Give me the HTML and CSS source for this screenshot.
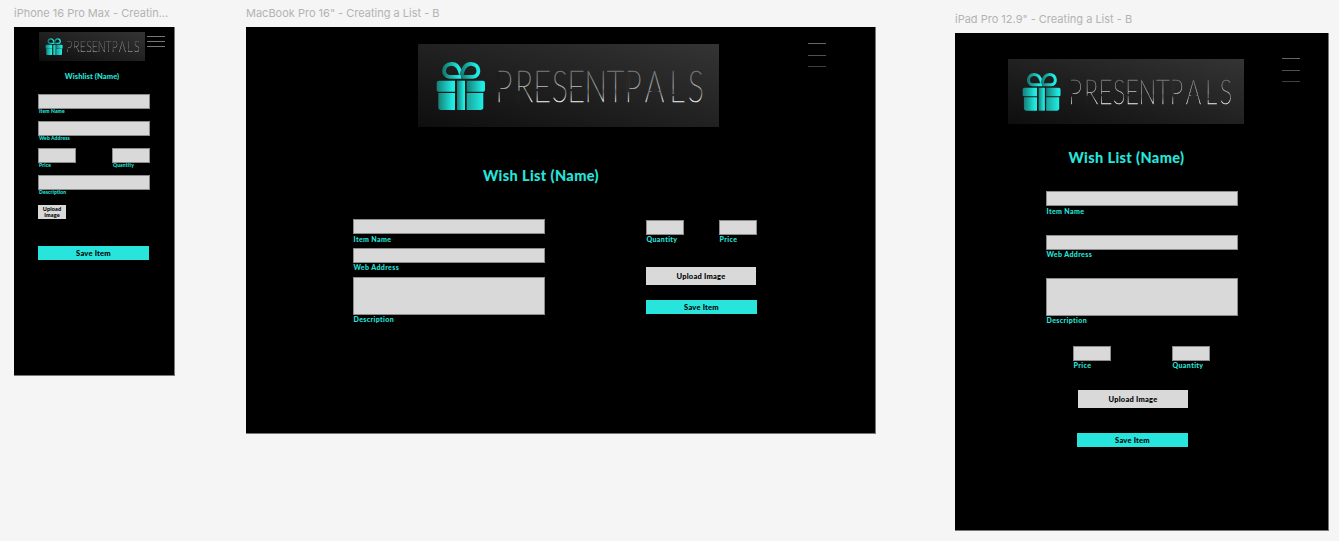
FILE: index.html
```html
<!DOCTYPE html>
<html lang="en">
<head>
<meta charset="utf-8">
<title>Creating a List - B</title>
<link rel="stylesheet" href="styles.css">
</head>
<body>
<svg class="defs" width="0" height="0" aria-hidden="true">
  <defs>
    <linearGradient id="teal"><stop offset="0" stop-color="#168078"/><stop offset=".85" stop-color="#20eee5"/></linearGradient>
    <linearGradient id="teal-soft"><stop offset="0" stop-color="#1ba69d"/><stop offset="1" stop-color="#20f2e8"/></linearGradient>
    <linearGradient id="panel" x1="0" y1="1" x2="1" y2="0"><stop offset="0" stop-color="#0f0f0f"/><stop offset="1" stop-color="#353535"/></linearGradient>
    <linearGradient id="silver" x1="0" y1="0" x2="0" y2="1"><stop offset=".2" stop-color="#6c6c6c"/><stop offset=".55" stop-color="#a8a8a8"/><stop offset=".62" stop-color="#777"/><stop offset=".8" stop-color="#e2e2e2"/></linearGradient>
    <symbol id="gift" viewBox="0 0 301 83">
      <rect width="301" height="83" fill="url(#panel)"/>
      <path d="M43.3 32.8H31.5C23.8 32.5 24.2 20.2 33.5 19.8C39.5 19.6 42 25.5 43.3 31.5" fill="none" stroke="url(#teal)" stroke-width="3.8"/>
      <path d="M43.3 32.8H55C62.7 32.5 62.3 20.2 53 19.8C47 19.6 44.6 25.5 43.3 31.5" fill="none" stroke="url(#teal)" stroke-width="3.8"/>
      <path d="M37 36.7H21Q18.7 36.7 18.7 39V46Q18.7 47.7 20.4 47.7H37Z" fill="url(#teal)"/>
      <path d="M48.7 36.7H64.7Q67 36.7 67 39V46Q67 47.7 65.3 47.7H48.7Z" fill="url(#teal)"/>
      <path d="M20.3 49H37V66H23Q20.3 66 20.3 63.3Z" fill="url(#teal)"/>
      <path d="M48.7 49H65.3V63.3Q65.3 66 62.6 66H48.7Z" fill="url(#teal-soft)"/>
      <rect x="39" y="36.7" width="8" height="29.3" fill="url(#teal)"/>
    </symbol>
    <!-- stencil gaps in the wordmark -->
    <symbol id="gaps" viewBox="0 0 301 83">
      <rect x="78.500" y="28" width="4" height="20" fill="#1e1e1e"/>
      <rect x="98.500" y="47" width="4" height="12" fill="#1e1e1e"/>
      <rect x="116.500" y="45" width="4" height="2" fill="#212121"/>
      <rect x="150.500" y="45" width="4" height="2" fill="#232323"/>
      <rect x="207.500" y="28" width="4" height="20" fill="#292929"/>
      <rect x="233.500" y="44.500" width="7" height="4" fill="#292929"/>
      <rect x="252.500" y="50" width="4" height="2" fill="#2a2a2a"/>
    </symbol>
  </defs>
</svg>
<main class="canvas">
  <section class="artboard phone">
    <h2 class="artboard-name">iPhone 16 Pro Max - Creatin...</h2>
    <div class="screen">
      <header class="top">
        <svg class="logo" viewBox="0 0 301 83" preserveAspectRatio="none"><use href="#gift" width="301" height="83"/><text class="wordmark" transform="translate(0 58) scale(.68 1)" x="114 143 170 197 220 245 278 304 334 370 397">PRESENTPALS</text><use href="#gaps" width="301" height="83"/></svg>
        <div class="menu"><i></i><i></i><i></i></div>
      </header>
      <h1 class="title">Wishlist (Name)</h1>
      <form class="form">
        <label class="field"><span class="box"></span><span class="caption">Item Name</span></label>
        <label class="field"><span class="box"></span><span class="caption">Web Address</span></label>
        <div class="pair">
          <label class="field"><span class="box"></span><span class="caption">Price</span></label>
          <label class="field"><span class="box"></span><span class="caption">Quantity</span></label>
        </div>
        <label class="field"><span class="box"></span><span class="caption">Description</span></label>
        <button type="button" class="upload">Upload<br>Image</button>
        <button type="button" class="save">Save Item</button>
      </form>
    </div>
  </section>

  <section class="artboard laptop">
    <h2 class="artboard-name">MacBook Pro 16" - Creating a List - B</h2>
    <div class="screen">
      <header class="top">
        <svg class="logo" viewBox="0 0 301 83" preserveAspectRatio="none"><use href="#gift" width="301" height="83"/><text class="wordmark" transform="translate(0 58) scale(.68 1)" x="114 143 170 197 220 245 278 304 334 370 397">PRESENTPALS</text><use href="#gaps" width="301" height="83"/></svg>
        <div class="menu"><i></i><i></i><i></i></div>
      </header>
      <h1 class="title">Wish List (Name)</h1>
      <form class="form">
        <div class="details">
          <label class="field first"><span class="box"></span><span class="caption">Item Name</span></label>
          <label class="field"><span class="box"></span><span class="caption">Web Address</span></label>
          <label class="field"><span class="box tall"></span><span class="caption">Description</span></label>
        </div>
        <div class="actions">
          <div class="pair">
            <label class="field"><span class="box"></span><span class="caption">Quantity</span></label>
            <label class="field"><span class="box"></span><span class="caption">Price</span></label>
          </div>
          <button type="button" class="upload">Upload Image</button>
          <button type="button" class="save">Save Item</button>
        </div>
      </form>
    </div>
  </section>

  <section class="artboard tablet">
    <h2 class="artboard-name">iPad Pro 12.9" - Creating a List - B</h2>
    <div class="screen">
      <header class="top">
        <svg class="logo" viewBox="0 0 301 83" preserveAspectRatio="none"><use href="#gift" width="301" height="83"/><text class="wordmark" transform="translate(0 58) scale(.68 1)" x="114 143 170 197 220 245 278 304 334 370 397">PRESENTPALS</text><use href="#gaps" width="301" height="83"/></svg>
        <div class="menu"><i></i><i></i><i></i></div>
      </header>
      <h1 class="title">Wish List (Name)</h1>
      <form class="form">
        <label class="field first"><span class="box"></span><span class="caption">Item Name</span></label>
        <label class="field second"><span class="box"></span><span class="caption">Web Address</span></label>
        <label class="field"><span class="box tall"></span><span class="caption">Description</span></label>
        <div class="pair">
          <label class="field"><span class="box"></span><span class="caption">Price</span></label>
          <label class="field"><span class="box"></span><span class="caption">Quantity</span></label>
        </div>
        <button type="button" class="upload">Upload Image</button>
        <button type="button" class="save">Save Item</button>
      </form>
    </div>
  </section>
</main>
</body>
</html>
```

FILE: styles.css
```css
* { box-sizing: border-box; }
body { margin: 0; background: #f5f5f5; overflow: hidden; font-family: Lato, "Open Sans", sans-serif; }
.defs { display: block; }
.canvas { display: flex; align-items: flex-start; width: 1339px; height: 541px; padding: 5px 0 0 14px; }
.artboard { flex: none; }
.laptop { margin-left: 71px; }
.tablet { margin: 6px 0 0 79px; }
.artboard-name { margin: 0; height: 22px; font: 400 11px/17px Inter, sans-serif; letter-spacing: 0; color: #b3b3b3; white-space: nowrap; }
.screen { background: #000; border: 1px solid #777; border-width: 0 1px 1px 0; overflow: hidden; }
.phone, .phone .screen { width: 161px; }
.phone .screen { height: 349px; }
.laptop .screen { width: 630px; height: 407px; }
.tablet .screen { width: 374px; height: 498px; }

.top { display: flex; align-items: flex-start; }
.logo { display: block; flex: none; opacity: .99; will-change: opacity; }
.wordmark { font: 100 44px Lato, sans-serif; fill: url(#silver); stroke: url(#silver); stroke-width: .7px; }
.menu { display: flex; flex-direction: column; justify-content: space-between; width: 18px; }
.menu i { height: 1px; background: #666; }
.menu i:nth-child(2) { background: #505050; }
.menu i:nth-child(3) { background: #404040; }

.title { margin: 0; font-weight: 900; color: #27e5dc; text-align: center; white-space: nowrap; }
.field { display: block; }
.box { display: block; height: 15px; background: #d9d9d9; border: 1px solid #8c8c8c; }
.box.tall { height: 38px; }
.caption { display: block; height: 11px; margin-top: -1px; padding-left: .5px; font-size: 7px; line-height: 10px; font-weight: 900; letter-spacing: .38px; color: #27e5dc; white-space: nowrap; }
.pair { display: flex; justify-content: space-between; }
.pair .field { width: 38px; }
.upload, .save { display: block; padding: 1px 0 0; border: 0; border-radius: 0; font: 900 7.5px/10px Lato, sans-serif; letter-spacing: .22px; color: #000; text-align: center; }
.upload { background: #d9d9d9; }
.save { background: #27e5dc; }

.phone .top { padding: 5px 0 0 25px; gap: 2px; }
.phone .logo { width: 106px; height: 29px; }
.phone .menu { height: 11px; margin-top: 4px; }
.phone .menu i { background: #777; }
.phone .title { width: 156px; margin-top: 10px; font-size: 7.5px; line-height: 12px; letter-spacing: .1px; }
.phone .form { width: 112px; margin: 11px 0 0 24px; }
.phone .box { height: 15px; }
.phone .caption { height: 12px; margin-top: 0; padding-left: 1px; font-size: 5px; line-height: 5px; letter-spacing: .12px; }
.phone .upload { width: 28px; height: 14px; margin-top: 3px; padding: 0; font-size: 5.5px; line-height: 6px; letter-spacing: .1px; }
.phone .save { width: 111px; height: 14px; margin-top: 27px; }

.laptop .top { padding: 17px 0 0 172px; gap: 89px; }
.laptop .logo { width: 301px; height: 83px; }
.laptop .menu { height: 24px; margin-top: -1px; }
.laptop .title { width: 590px; margin-top: 39px; font-size: 14.5px; line-height: 20px; letter-spacing: .38px; }
.laptop .form { display: flex; gap: 101px; margin: 33px 0 0 107px; }
.details { width: 192px; }
.laptop .details .caption { height: 15px; }
.laptop .details .first .caption { padding-top: 1px; }
.actions { width: 111px; padding-top: 1px; }
.laptop .upload { width: 110px; height: 18px; margin-top: 22px; }
.laptop .save { width: 111px; height: 14px; margin-top: 15px; }

.tablet .top { padding: 26px 0 0 53px; gap: 38px; }
.tablet .logo { width: 236px; height: 65px; }
.tablet .menu { height: 24px; margin-top: -1px; }
.tablet .title { width: 343px; margin-top: 24px; font-size: 14.5px; line-height: 20px; letter-spacing: .38px; }
.tablet .form { width: 192px; margin: 23px 0 0 91px; }
.tablet .first .caption { height: 30px; padding-top: 1px; }
.tablet .second .caption { height: 29px; }
.tablet .pair { width: 137px; margin: 20px 0 0 27px; }
.tablet .upload { width: 110px; height: 18px; margin: 19px 0 0 32px; }
.tablet .save { width: 111px; height: 14px; margin: 25px 0 0 31px; }
```
